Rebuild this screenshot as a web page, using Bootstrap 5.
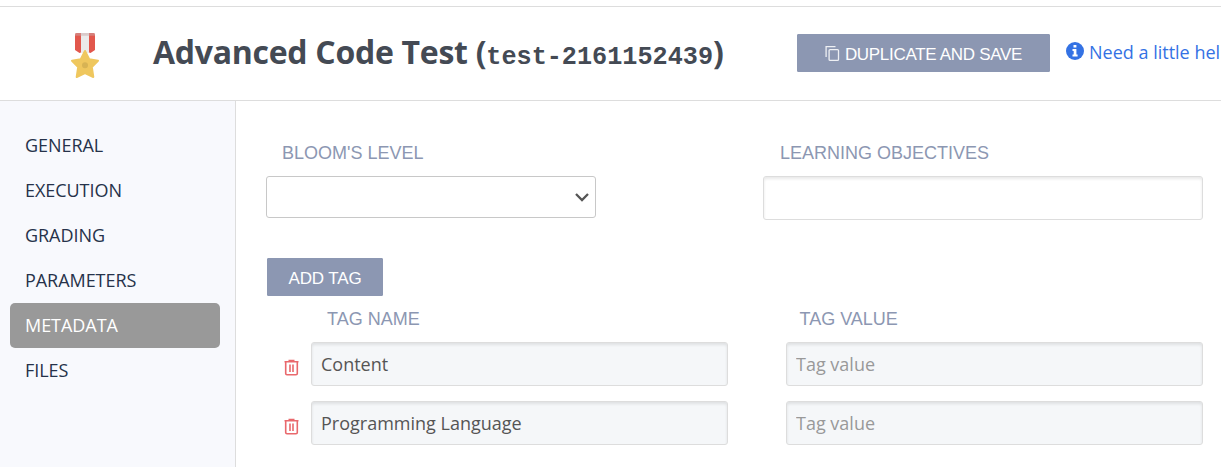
<!DOCTYPE html>
<html lang="en">
<head>
<meta charset="utf-8">
<meta name="viewport" content="width=device-width, initial-scale=1">
<title>Advanced Code Test</title>
<link href="https://cdn.jsdelivr.net/npm/bootstrap@5.3.0/dist/css/bootstrap.min.css" rel="stylesheet">
<style>
  body { font-family: "Open Sans", sans-serif; font-size: 18px; line-height: 25px; color: #3f4652; background: #fff; height: 467px; overflow: hidden; }
  .page-head { margin-top: 6px; height: 95px; border-top: 1px solid #ddd; border-bottom: 1px solid #ddd; padding-left: 70px; }
  .medal { margin-top: 26px; }
  .page-title { font-size: 32px; font-weight: 700; line-height: 44px; color: #444a54; margin: 23px 0 0 53px; width: 644px; letter-spacing: -.28px; }
  .page-title code { font-family: "Liberation Mono", monospace; font-size: 25.2px; color: inherit; letter-spacing: 0; }
  .btn-slate { --bs-btn-color: #fff; --bs-btn-bg: #8c97b2; --bs-btn-border-color: #8c97b2; --bs-btn-hover-color: #fff; --bs-btn-hover-bg: #7c88a5; --bs-btn-border-radius: 1px; font-family: "Liberation Sans", sans-serif; font-size: 17px; line-height: 24px; height: 38px; padding: 8px 0 4px; }
  .btn-copy { width: 253px; margin-top: 27px; letter-spacing: -.3px; }
  .help-link { color: #3472e4; margin: 31px 0 0 16px; line-height: 28px; }
  .side-nav { width: 236px; background: #f8f9fd; border-right: 1px solid #ddd; padding: 22px 15px 0 10px; }
  .side-nav .nav-link { height: 45px; padding: 10px 15px; color: #26324a; font-size: 18px; line-height: 25px; letter-spacing: -.05px; --bs-nav-pills-border-radius: 5px; }
  .side-nav .nav-link.active { background: #999; color: #fff; }
  .content-pane { padding: 39px 18px 0 30px; }
  .field-label { display: block; font-family: "Liberation Sans", sans-serif; font-size: 18px; line-height: 26px; color: #8c97b2; padding-left: 16px; margin-bottom: 10px; }
  .level-col { width: 330px; }
  .goal-col { width: 440px; }
  .goal-col .field-label { padding-left: 17px; }
  .level-select { height: 42px; border: 1px solid #c8c8c8; border-radius: 3px; background-image: none; }
  .chevron { right: 6px; top: 13px; }
  .field-input { height: 44px; border: 1px solid #ddd; border-radius: 3px; box-shadow: inset 0 2px 3px rgba(0,0,0,.09); font-size: 18px; line-height: 25px; padding: 8px 9px 9px; color: #555; }
  .field-input.tinted { background: #f5f7f9; }
  .field-input::placeholder { color: #999; }
  .btn-tag { width: 116px; margin: 38px 0 0 1px; letter-spacing: -.15px; }
  .tag-grid { display: grid; grid-template-columns: 45px 417px 417px; column-gap: 0; row-gap: 15px; margin-top: 10px; }
  .tag-grid > :nth-child(3n) { margin-left: 58px; width: 417px; }
  .tag-grid .field-label { margin-bottom: -5px; }
  .tag-grid > span.field-label:nth-child(3) { padding-left: 13.5px; }
  .trash-btn { width: 17px; height: 18px; margin: 17px 0 0 17px; }
</style>
<script src="https://cdn.jsdelivr.net/npm/bootstrap@5.3.0/dist/js/bootstrap.bundle.min.js"></script>
</head>
<body class="d-flex flex-column">
<header class="page-head d-flex align-items-start flex-shrink-0 text-nowrap">
  <svg class="medal flex-shrink-0" width="30" height="46" viewBox="0 0 30 46" aria-hidden="true">
    <path d="M5 1.5Q5 0 6.5 0H11V19.5L9.500 20L5 17Z" fill="#e2574c"/>
    <path d="M19 0H23.500Q25 0 25 1.500V17L20.500 20L19 19.500Z" fill="#e2574c"/>
    <path d="M11 0H19V20H11Z" fill="#ebebeb"/>
    <path d="M6 0H24L25 1V2.700H5V1Z" fill="#c9a9a9" opacity=".5"/>
    <path d="M15 18L19.200 26.300L28 27.700L21.800 34L23.300 44L15 40.200L6.700 44L8.200 34L2 27.700L10.800 26.300Z" fill="#efc75e" stroke="#efc75e" stroke-width="2" stroke-linejoin="round"/>
    <circle cx="15" cy="32.300" r="3" fill="#d7b354"/>
  </svg>
  <h1 class="page-title flex-shrink-0">Advanced Code Test (<code>test-2161152439</code>)</h1>
  <button class="btn btn-slate btn-copy flex-shrink-0 d-flex justify-content-center" type="button">
    <svg class="me-1" width="16" height="18" viewBox="0 0 16 18" fill="none" stroke="#fff" stroke-opacity=".85" stroke-width="1.300" aria-hidden="true" style="margin-top:2px"><path d="M1.100 12V1.600H10.500"/><rect x="4.100" y="4.600" width="9.400" height="10.800" rx="1"/></svg>DUPLICATE AND SAVE
  </button>
  <a class="help-link text-decoration-none d-flex flex-shrink-0" href="#">
    <svg width="18" height="18" viewBox="0 0 18 18" style="margin:4px 5px 0 0" aria-hidden="true"><circle cx="9" cy="9" r="9" fill="#3472e4"/><path d="M7.500 3H10.400V5.600H7.500ZM6.500 7H10.400V12.500H11.600V14.400H6.500V12.500H7.700V8.900H6.500Z" fill="#fff"/></svg>Need a little hel
  </a>
</header>
<div class="d-flex flex-grow-1">
  <nav class="side-nav nav nav-pills flex-column flex-nowrap flex-shrink-0">
    <a class="nav-link" href="#">GENERAL</a>
    <a class="nav-link" href="#">EXECUTION</a>
    <a class="nav-link" href="#">GRADING</a>
    <a class="nav-link" href="#">PARAMETERS</a>
    <a class="nav-link active" href="#">METADATA</a>
    <a class="nav-link" href="#">FILES</a>
  </nav>
  <main class="content-pane flex-grow-1">
    <div class="d-flex justify-content-between">
      <div class="level-col">
        <label class="field-label" for="level">BLOOM'S LEVEL</label>
        <div class="position-relative">
          <select class="form-select level-select" id="level"><option></option></select>
          <svg class="chevron position-absolute pe-none" width="16" height="16" viewBox="0 0 16 16" fill="none" stroke="#555" stroke-width="2.300" aria-hidden="true"><path d="M2 5L8 11L14 5"/></svg>
        </div>
      </div>
      <div class="goal-col">
        <label class="field-label" for="goals">LEARNING OBJECTIVES</label>
        <input class="form-control field-input" id="goals" type="text">
      </div>
    </div>
    <button class="btn btn-slate btn-tag" type="button">ADD TAG</button>
    <div class="tag-grid">
      <span></span><span class="field-label">TAG NAME</span><span class="field-label">TAG VALUE</span>
      <svg class="trash-btn" viewBox="0 0 17 18" fill="none" stroke="#e9686c" stroke-width="1.600" aria-label="Delete"><path d="M1.500 2.700H15.500M5.500 1.500H11.500M2.700 3V14.500Q2.700 15.700 4 15.700H13Q14.300 15.700 14.300 14.500V3M7 5.500V13M10 5.500V13"/></svg>
      <input class="form-control field-input tinted" type="text" value="Content">
      <input class="form-control field-input tinted" type="text" placeholder="Tag value">
      <svg class="trash-btn" viewBox="0 0 17 18" fill="none" stroke="#e9686c" stroke-width="1.600" aria-label="Delete"><path d="M1.500 2.700H15.500M5.500 1.500H11.500M2.700 3V14.500Q2.700 15.700 4 15.700H13Q14.300 15.700 14.300 14.500V3M7 5.500V13M10 5.500V13"/></svg>
      <input class="form-control field-input tinted" type="text" value="Programming Language">
      <input class="form-control field-input tinted" type="text" placeholder="Tag value">
    </div>
  </main>
</div>
</body>
</html>
